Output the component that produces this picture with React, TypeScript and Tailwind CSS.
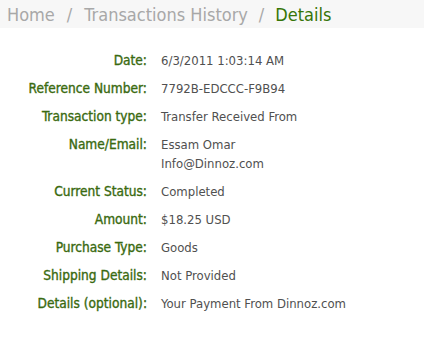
import React from "react";

const rows: { label: string; value: string[] }[] = [
  { label: "Date:", value: ["6/3/2011 1:03:14 AM"] },
  { label: "Reference Number:", value: ["7792B-EDCCC-F9B94"] },
  { label: "Transaction type:", value: ["Transfer Received From"] },
  { label: "Name/Email:", value: ["Essam Omar", "Info@Dinnoz.com"] },
  { label: "Current Status:", value: ["Completed"] },
  { label: "Amount:", value: ["$18.25 USD"] },
  { label: "Purchase Type:", value: ["Goods"] },
  { label: "Shipping Details:", value: ["Not Provided"] },
  { label: "Details (optional):", value: ["Your Payment From Dinnoz.com"] },
];

export default function App() {
  return (
    <div
      className="w-[424px] h-[337px] bg-white overflow-hidden"
      style={{ fontFamily: '"DejaVu Sans Condensed", "DejaVu Sans", sans-serif' }}
    >
      <div className="h-[28px] bg-[#f7f7f7] pl-[7px] pt-[3px] text-[18px] leading-[24px] text-[#a8a8a8]">
        <span>Home</span>
        <span className="mx-[12px]">/</span>
        <span>Transactions History</span>
        <span className="mx-[11px]">/</span>
        <span className="text-[#367508]">Details</span>
      </div>
      <div className="grid grid-cols-[147px_1fr] gap-x-[14px] gap-y-[9px] pt-[23px] text-[13px] leading-[19px]">
        {rows.map((r) => (
          <React.Fragment key={r.label}>
            <div className="text-right text-[#3a6a10] text-[13.6px] [-webkit-text-stroke:0.35px_#3a6a10]">
              {r.label}
            </div>
            <div className="text-[#505050]">
              {r.value.map((v) => (
                <div key={v}>{v}</div>
              ))}
            </div>
          </React.Fragment>
        ))}
      </div>
    </div>
  );
}
